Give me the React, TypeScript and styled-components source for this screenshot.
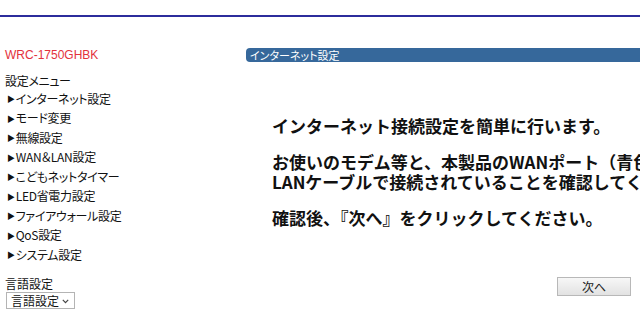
import React from "react";
import styled, { createGlobalStyle } from "styled-components";

const GlobalStyle = createGlobalStyle`
  html, body {
    margin: 0;
    padding: 0;
    background: #ffffff;
    overflow: hidden;
  }
  body {
    font-family: "Noto Sans CJK JP", "Liberation Sans", sans-serif;
    color: #111;
  }
`;

const Page = styled.div`
  width: 640px;
  height: 327px;
  overflow: hidden;
`;

const TopRule = styled.div`
  height: 15px;
  border-bottom: 2px solid #2c2c9c;
`;

const Layout = styled.div`
  display: flex;
  align-items: flex-start;
`;

const Sidebar = styled.nav`
  width: 240px;
  flex: none;
  padding: 30px 0 0 5px;
  box-sizing: border-box;
  display: flex;
  flex-direction: column;
  align-items: flex-start;
`;

const Model = styled.div`
  font-family: "Liberation Sans", sans-serif;
  font-size: 12px;
  line-height: 16px;
  color: #e3323c;
`;

const MenuTitle = styled.div`
  margin-top: 10px;
  font-size: 12px;
  line-height: 16px;
  font-feature-settings: "palt";
  letter-spacing: -0.3px;
`;

const MenuList = styled.ul`
  list-style: none;
  margin: 0;
  padding: 0 0 0 2px;
`;

const MenuItem = styled.li`
  display: flex;
  align-items: center;
  height: 19.5px;
  font-size: 12px;
  line-height: 16px;
  font-feature-settings: "palt";
  letter-spacing: -0.3px;
  white-space: nowrap;
`;

const Arrow = styled.span`
  font-size: 8px;
  line-height: 8px;
  margin-right: 1px;
  margin-top: 1px;
`;

const LangTitle = styled.div`
  margin-top: 11px;
  font-size: 12px;
  line-height: 16px;
`;

const SelectWrap = styled.div`
  position: relative;
  margin: 0 0 0 1px;
  width: 69px;
  height: 17px;
`;

const LangSelect = styled.select`
  display: block;
  appearance: none;
  -webkit-appearance: none;
  width: 69px;
  height: 17px;
  box-sizing: border-box;
  margin: 0;
  padding: 0 0 0 4px;
  font-family: "Noto Sans CJK JP", sans-serif;
  font-size: 12px;
  line-height: 15px;
  border: 1px solid #b4b4b4;
  border-radius: 0;
  background: #fff;
  color: #111;
  outline: none;
`;

const Chevron = styled.svg`
  display: block;
  position: absolute;
  right: 6px;
  top: 7px;
  pointer-events: none;
`;

const Main = styled.main`
  flex: 1;
  margin-left: 6px;
  padding-top: 31px;
  min-width: 0;
  display: flex;
  flex-direction: column;
`;

const TitleBar = styled.div`
  height: 14px;
  background: #36689b;
  border-radius: 4px 0 0 4px;
  color: #fff;
  font-size: 11px;
  line-height: 14px;
  padding-left: 4px;
  font-feature-settings: "palt";
  white-space: nowrap;
`;

const Content = styled.div`
  padding: 54px 0 0 26px;
  white-space: nowrap;
  overflow: hidden;
`;

const Para = styled.p`
  margin: 0 0 16px 0;
  font-size: 17px;
  font-weight: bold;
  line-height: 20px;
`;

const Actions = styled.div`
  display: flex;
  justify-content: flex-end;
  padding: 33px 9px 0 0;
`;

const NextButton = styled.button`
  width: 74px;
  height: 19px;
  padding: 0;
  font-family: "Noto Sans CJK JP", sans-serif;
  font-size: 12px;
  line-height: 17px;
  color: #222;
  border: 1px solid #b8b8b8;
  border-radius: 0;
  background: linear-gradient(#f7f7f7, #e2e2e2);
`;

const menu = [
  "インターネット設定",
  "モード変更",
  "無線設定",
  "WAN＆LAN設定",
  "こどもネットタイマー",
  "LED省電力設定",
  "ファイアウォール設定",
  "QoS設定",
  "システム設定",
];

export default function App() {
  return (
    <Page>
      <GlobalStyle />
      <TopRule />
      <Layout>
        <Sidebar>
          <Model>WRC-1750GHBK</Model>
          <MenuTitle>設定メニュー</MenuTitle>
          <MenuList>
            {menu.map((m) => (
              <MenuItem key={m}>
                <Arrow>▶</Arrow>
                {m}
              </MenuItem>
            ))}
          </MenuList>
          <LangTitle>言語設定</LangTitle>
          <SelectWrap>
            <LangSelect defaultValue="lang">
              <option value="lang">言語設定</option>
            </LangSelect>
            <Chevron width="7" height="5" viewBox="0 0 7 5">
              <path d="M0.8 0.8 L3.5 3.6 L6.2 0.8" fill="none" stroke="#444" strokeWidth="1.2" />
            </Chevron>
          </SelectWrap>
        </Sidebar>
        <Main>
          <TitleBar>インターネット設定</TitleBar>
          <Content>
            <Para>インターネット接続設定を簡単に行います。</Para>
            <Para>
              お使いのモデム等と、本製品のWANポート（青色）が
              <br />
              LANケーブルで接続されていることを確認してください。
            </Para>
            <Para>確認後、『次へ』をクリックしてください。</Para>
          </Content>
          <Actions>
            <NextButton>次へ</NextButton>
          </Actions>
        </Main>
      </Layout>
    </Page>
  );
}
